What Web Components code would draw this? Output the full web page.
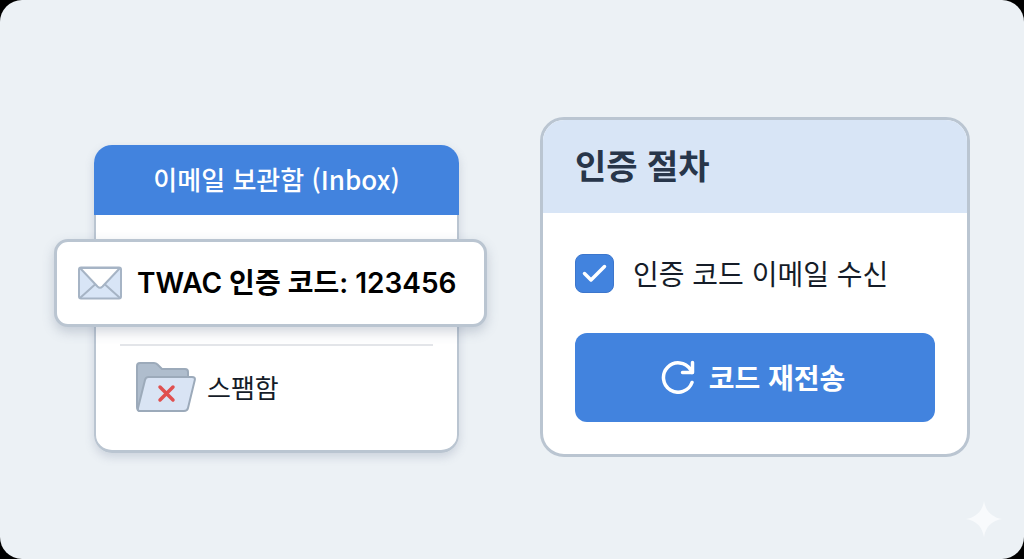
<!DOCTYPE html>
<html lang="ko">
<head>
<meta charset="utf-8">
<meta name="viewport" content="width=device-width, initial-scale=1">
<title>이메일 인증</title>
<style>
    html, body {
        height: 100%;
    }
    body {
        margin: 0;
        background-color: #000;
        font-family: "Noto Sans CJK KR", "Noto Sans", sans-serif;
        color: #151c28;
        --blue: #4283de;
        --line: #bac5d1;
    }
</style>
</head>
<body>
<auth-stage>
    <inbox-card>
        <span slot="title">이메일 보관함 (Inbox)</span>
        <mail-banner>TWAC 인증 코드: 123456</mail-banner>
        <spam-folder slot="folder">스팸함</spam-folder>
    </inbox-card>
    <steps-card>
        <span slot="title">인증 절차</span>
        <check-field>인증 코드 이메일 수신</check-field>
        <resend-button>코드 재전송</resend-button>
    </steps-card>
</auth-stage>

<script>
/**
 * Shared base: clones a template string
 * into an open shadow root
 */
class BaseElement extends HTMLElement {
    constructor(){
        super();
        this.template = document.createElement('template');
        this.template.innerHTML = this.constructor.templateString;
        this.attachShadow({mode: 'open'});
        this.shadowRoot.append(
            this.template.content.cloneNode(true)
        );
    }
}

/**
 * AuthStage
 * Rounded page surface that holds the two cards
 */
class AuthStage extends BaseElement {
    static templateString = `
<style>
    :host {
        position: relative;
        display: block;
        box-sizing: border-box;
        min-height: 100%;
        padding: 117px 54px 100px 94px;
        border-radius: 22px;
        background-color: #ecf1f5;
    }
    main {
        display: grid;
        grid-template-columns: 365fr 430fr;
        align-items: start;
        gap: 81px;
    }
    .sparkle {
        position: absolute;
        right: 22px;
        bottom: 22px;
        width: 36px;
        height: 36px;
    }
</style>
<main><slot></slot></main>
<svg class="sparkle" viewBox="0 0 36 36" aria-hidden="true">
    <path fill="#f8fafc" d="M18 0C19.5 10 26 16.500 36 18C26 19.500 19.500 26 18 36C16.500 26 10 19.500 0 18C10 16.500 16.500 10 18 0Z"/>
</svg>
`;
}

/**
 * InboxCard
 * Mailbox panel. The default slot holds the mail
 * that hangs over both sides of the card.
 */
class InboxCard extends BaseElement {
    static templateString = `
<style>
    :host {
        display: block;
        margin-top: 28px;
        border-radius: 18px;
        background-color: #fff;
        box-shadow: 0 4px 10px rgba(90, 105, 135, 0.22);
    }
    header {
        padding: 15px 20px 17px;
        border-radius: 18px 18px 0 0;
        background-color: var(--blue);
    }
    h2 {
        margin: 0;
        font-size: 26px;
        font-weight: 500;
        line-height: 38px;
        text-align: center;
        color: #fff;
    }
    .body {
        padding: 24px 0 38px;
        border: solid var(--line);
        border-width: 0 2px 3px;
        border-radius: 0 0 18px 18px;
    }
    hr {
        height: 2px;
        margin: 17px 24px 16px;
        border: 0;
        background-color: #e3e5e9;
    }
</style>
<header><h2><slot name="title"></slot></h2></header>
<div class="body">
    <slot></slot>
    <hr>
    <slot name="folder"></slot>
</div>
`;
}

/**
 * MailBanner
 * Highlighted message row with an envelope
 */
class MailBanner extends BaseElement {
    static templateString = `
<style>
    :host {
        position: relative;
        display: flex;
        align-items: center;
        gap: 14px;
        margin: 0 -30px 0 -42px;
        padding: 22px 20px;
        border: 3px solid var(--line);
        border-radius: 14px;
        background-color: #fff;
        box-shadow: 0 5px 12px rgba(80, 95, 125, 0.26);
        font-family: Inter, "Noto Sans CJK KR", sans-serif;
        font-size: 28px;
        font-weight: 600;
        line-height: 38px;
        white-space: nowrap;
        color: #000;
    }
    svg {
        flex: none;
        width: 46px;
        height: 34px;
    }
</style>
<svg viewBox="0 0 46 34" fill="none" stroke="#a6b4c5" stroke-width="2" stroke-linejoin="round" aria-hidden="true">
    <rect x="2" y="1.500" width="42" height="31" rx="2" fill="#d8e5f6"/>
    <path d="M3 32L18 18.500M43 32L28 18.500"/>
    <path fill="#fff" d="M3 2L20.500 20.500Q23 23 25.500 20.500L43 2Z"/>
</svg>
<slot></slot>
`;
}

/**
 * SpamFolder
 * Folder row with a red cross on its front
 */
class SpamFolder extends BaseElement {
    static templateString = `
<style>
    :host {
        display: flex;
        align-items: center;
        gap: 11px;
        padding-left: 40px;
        font-size: 26px;
        line-height: 38px;
    }
    svg {
        flex: none;
        width: 60px;
        height: 50px;
    }
</style>
<svg viewBox="0 0 60 50" fill="none" stroke-linejoin="round" aria-hidden="true">
    <path fill="#afbdcd" stroke="#9caaba" stroke-width="2" d="M1 45V4Q1 1 4 1H18Q20 1 21.500 2.500L26 7H49Q52 7 52 10V45L4 49Q1 49 1 45Z"/>
    <path fill="#d9e4f4" stroke="#9caaba" stroke-width="2" d="M12.500 15H56Q59.500 15 58.800 18L52 46Q51.300 49 48 49H4Q1.500 49 2 46L9 18Q9.800 15 12.500 15Z"/>
    <path stroke="#e0504f" stroke-width="3.500" stroke-linecap="round" d="M24 25L37 38M37 25L24 38"/>
</svg>
<slot></slot>
`;
}

/**
 * StepsCard
 * Panel with a pale heading and a column of controls
 */
class StepsCard extends BaseElement {
    static templateString = `
<style>
    :host {
        display: block;
        overflow: hidden;
        border: 3px solid var(--line);
        border-radius: 24px;
        background-color: #fff;
    }
    header {
        padding: 20px 32px 23px;
        background-color: #d8e5f6;
    }
    h2 {
        margin: 0;
        font-size: 34px;
        font-weight: 700;
        line-height: 50px;
        color: #28364a;
    }
    .body {
        display: flex;
        flex-direction: column;
        gap: 40px;
        padding: 40px 32px 32px;
    }
</style>
<header><h2><slot name="title"></slot></h2></header>
<div class="body"><slot></slot></div>
`;
}

class CheckField extends BaseElement {
    static templateString = `
<style>
    :host {
        display: block;
    }
    label {
        display: flex;
        align-items: center;
        gap: 19px;
        font-size: 28px;
        line-height: 40px;
    }
    .box {
        display: grid;
        flex: none;
    }
    input,
    svg {
        grid-area: 1 / 1;
        width: 39px;
        height: 39px;
        margin: 0;
    }
    input {
        appearance: none;
        box-sizing: border-box;
        border: 1px solid #3c76cc;
        border-radius: 8px;
        background-color: #fff;
    }
    input:checked {
        background-color: var(--blue);
    }
    svg {
        pointer-events: none;
    }
    input:not(:checked) + svg {
        visibility: hidden;
    }
</style>
<label>
    <span class="box">
        <input type="checkbox" checked>
        <svg viewBox="0 0 39 39" fill="none" stroke="#fff" stroke-width="3.500" stroke-linecap="round" stroke-linejoin="round" aria-hidden="true">
            <path d="M9.500 19.500L16 26L29.500 12.500"/>
        </svg>
    </span>
    <span><slot></slot></span>
</label>
`;
}

class ResendButton extends BaseElement {
    static templateString = `
<style>
    :host {
        display: block;
    }
    button {
        display: flex;
        align-items: center;
        justify-content: center;
        gap: 14px;
        width: 100%;
        padding: 24px 28px 25px 24px;
        border: 0;
        border-radius: 12px;
        background-color: var(--blue);
        font-family: inherit;
        font-size: 28px;
        font-weight: 700;
        line-height: 40px;
        color: #fff;
    }
    svg {
        flex: none;
        width: 34px;
        height: 34px;
    }
</style>
<button type="button">
    <svg viewBox="0 0 34 34" fill="none" stroke="#fff" stroke-width="3.500" stroke-linecap="round" stroke-linejoin="round" aria-hidden="true">
        <path d="M31 22.500A14.700 14.700 0 1 1 29.500 9.500L31 12.500"/>
        <path d="M31.500 2.500V12.500H21.500"/>
    </svg>
    <slot></slot>
</button>
`;
}

window.customElements.define('auth-stage', AuthStage);
window.customElements.define('inbox-card', InboxCard);
window.customElements.define('mail-banner', MailBanner);
window.customElements.define('spam-folder', SpamFolder);
window.customElements.define('steps-card', StepsCard);
window.customElements.define('check-field', CheckField);
window.customElements.define('resend-button', ResendButton);
</script>
</body>
</html>
